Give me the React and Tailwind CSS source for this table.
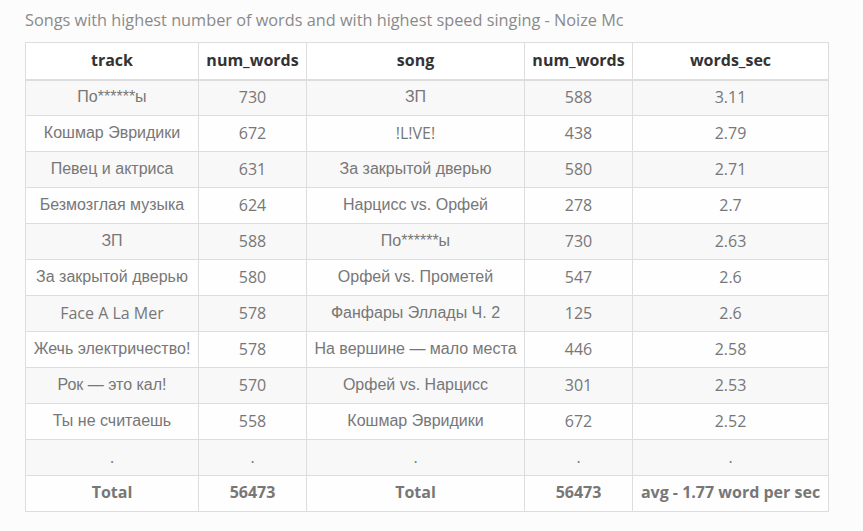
import React from "react";

const rows = [
  ["По******ы", "730", "ЗП", "588", "3.11"],
  ["Кошмар Эвридики", "672", "!L!VE!", "438", "2.79"],
  ["Певец и актриса", "631", "За закрытой дверью", "580", "2.71"],
  ["Безмозглая музыка", "624", "Нарцисс vs. Орфей", "278", "2.7"],
  ["ЗП", "588", "По******ы", "730", "2.63"],
  ["За закрытой дверью", "580", "Орфей vs. Прометей", "547", "2.6"],
  ["Face A La Mer", "578", "Фанфары Эллады Ч. 2", "125", "2.6"],
  ["Жечь электричество!", "578", "На вершине — мало места", "446", "2.58"],
  ["Рок — это кал!", "570", "Орфей vs. Нарцисс", "301", "2.53"],
  ["Ты не считаешь", "558", "Кошмар Эвридики", "672", "2.52"],
  [".", ".", ".", ".", "."],
];

const widths = ["w-[173px]", "w-[108px]", "w-[218px]", "w-[108px]", "w-[196px]"];

const fontFor = (t) =>
  /[\u0400-\u04FF]/.test(t)
    ? "font-['Liberation_Sans',Arial,sans-serif]"
    : "font-['Open_Sans',sans-serif]";

export default function App() {
  return (
    <div className="min-h-[531px] w-[863px] bg-[#fcfcfc] pl-[25px] pt-[8px]">
      <div className="h-[24px] text-[16.3px] leading-[24px] text-[#8a8a8a] font-['Open_Sans',sans-serif]">
        Songs with highest number of words and with highest speed singing - Noize Mc
      </div>
      <table className="mt-[10px] border-collapse text-center">
        <thead>
          <tr className="bg-white">
            {["track", "num_words", "song", "num_words", "words_sec"].map((h, i) => (
              <th
                key={i}
                className={`${widths[i]} h-[37px] border border-[#dddddd] border-b-2 p-0 pb-[2px] text-[16px] font-bold text-[#333333] font-['Open_Sans',sans-serif]`}
              >
                {h}
              </th>
            ))}
          </tr>
        </thead>
        <tbody>
          {rows.map((r, ri) => (
            <tr key={ri} className={ri % 2 === 0 ? "bg-[#f8f8f8]" : "bg-[#fefefe]"}>
              {r.map((c, ci) => (
                <td
                  key={ci}
                  className={`h-[36px] border border-[#dddddd] p-0 pb-[2px] text-[16px] text-[#777777] ${fontFor(c)}`}
                >
                  {c}
                </td>
              ))}
            </tr>
          ))}
          <tr className="bg-[#fefefe]">
            {["Total", "56473", "Total", "56473", "avg - 1.77 word per sec"].map((c, ci) => (
              <td
                key={ci}
                className="h-[36px] border border-[#dddddd] p-0 pb-[3px] text-[16px] font-bold text-[#777777] font-['Open_Sans',sans-serif]"
              >
                {c}
              </td>
            ))}
          </tr>
        </tbody>
      </table>
    </div>
  );
}
